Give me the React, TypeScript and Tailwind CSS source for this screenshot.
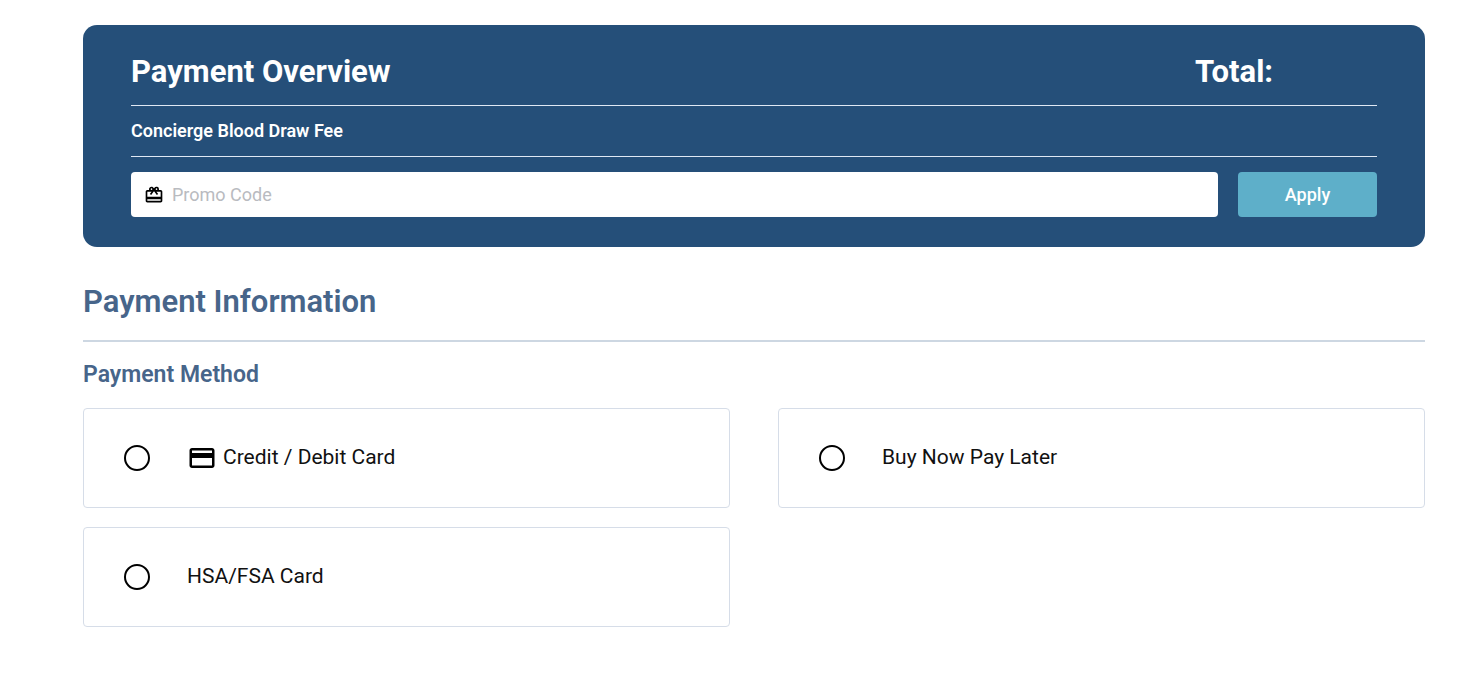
import React, { useState } from "react";
import { MdCreditCard, MdRedeem } from "react-icons/md";

const methods = [
  { id: "card", label: "Credit / Debit Card", icon: true },
  { id: "bnpl", label: "Buy Now Pay Later", icon: false },
  { id: "hsa", label: "HSA/FSA Card", icon: false },
];

const PaymentOverview: React.FC = () => {
  return (
    <section className="rounded-[14px] bg-[#254f79] px-12 pt-7 pb-[30px] text-white">
      <div className="flex items-center justify-between border-b border-[#dfe8f4] pb-[14px] text-[31px] leading-[38px] font-bold">
        <h1>Payment Overview</h1>
        <p className="w-[182px]">Total:</p>
      </div>
      <div className="border-b border-[#dfe8f4] py-[13px] text-lg leading-6 font-semibold">
        <p>Concierge Blood Draw Fee</p>
      </div>
      <form
        className="mt-[15px] flex gap-5"
        onSubmit={(e) => e.preventDefault()}
      >
        <label className="flex h-[45px] flex-1 items-center gap-2 rounded bg-white pl-[13px] text-black">
          <MdRedeem size={20} />
          <input
            type="text"
            aria-label="Promo Code"
            placeholder="Promo Code"
            className="h-full flex-1 rounded text-lg outline-none placeholder:text-[#b9bbc0]"
          />
        </label>
        <button
          type="submit"
          className="h-[45px] w-[139px] rounded bg-[#5eafc9] text-lg font-medium"
        >
          Apply
        </button>
      </form>
    </section>
  );
};

const PaymentInformation: React.FC = () => {
  const [method, setMethod] = useState("");

  return (
    <section className="mt-9 text-[#47658a]">
      <h2 className="border-b-2 border-[#cdd7e2] pb-[19px] text-[31px] leading-[38px] font-semibold">
        Payment Information
      </h2>
      <fieldset>
        <legend className="pt-5 pb-5 text-[23px] leading-[26px] font-semibold">
          Payment Method
        </legend>
        <div className="grid grid-cols-2 gap-x-12 gap-y-[19px]">
          {methods.map((m) => (
            <label
              key={m.id}
              className="flex h-[100px] items-center rounded border border-[#d6dde8] px-10 text-[21px] text-[#111]"
            >
              <input
                type="radio"
                name="method"
                value={m.id}
                checked={method === m.id}
                onChange={() => setMethod(m.id)}
                className="mr-[37px] size-[26px] appearance-none rounded-full border-2 border-black checked:border-8"
              />
              {m.icon && <MdCreditCard size={30} className="mr-1.5 text-black" />}
              <span>{m.label}</span>
            </label>
          ))}
        </div>
      </fieldset>
    </section>
  );
};

const App: React.FC = () => {
  return (
    <main className="bg-white pt-[25px] pr-[59px] pb-12 pl-[83px] font-[Roboto,sans-serif]">
      <PaymentOverview />
      <PaymentInformation />
    </main>
  );
};

export default App;
